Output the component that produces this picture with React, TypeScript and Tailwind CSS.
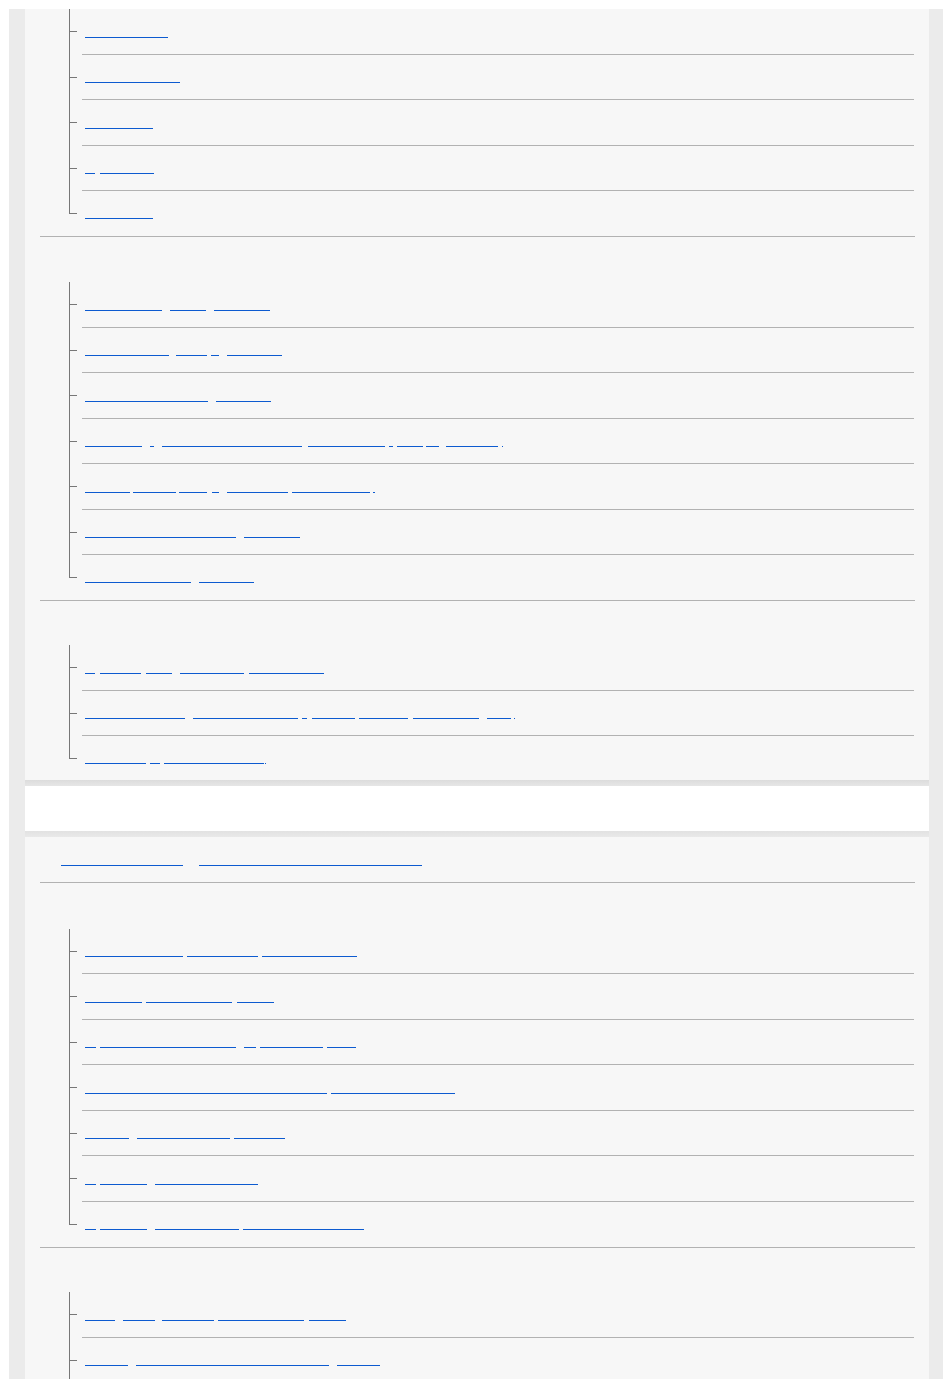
import React from "react";

type Seg = [number, number];

function Link({ segs, origin }: { segs: Seg[]; origin: number }) {
  const out: React.ReactNode[] = [];
  let prev = origin;
  segs.forEach(([a, b], i) => {
    out.push(
      <span
        key={i}
        className="block h-px shrink-0 bg-[#0d5bd0]"
        style={{ marginLeft: a - prev, width: b - a }}
      />
    );
    prev = b;
  });
  return (
    <a href="#" className="flex h-px" aria-label="link">
      {out}
    </a>
  );
}

function Item({ segs, last }: { segs: Seg[]; last: boolean }) {
  return (
    <li className="relative pl-[13px]">
      <span
        className={
          last
            ? "absolute left-0 top-0 h-[22px] w-px bg-[#777777]"
            : "absolute left-0 top-0 bottom-0 w-px bg-[#777777]"
        }
      />
      <span className="absolute left-0 top-[22px] h-px w-[8px] bg-[#777777]" />
      <div
        className={
          last
            ? "flex h-[45px] items-end pl-[3px] pb-[17px]"
            : "flex h-[45.5px] items-end border-b border-[#b2b2b2] pl-[3px] pb-[16px]"
        }
      >
        <Link segs={segs} origin={85} />
      </div>
    </li>
  );
}

function Tree({ items }: { items: Seg[][] }) {
  return (
    <ul className="ml-[29px] mr-[1px]">
      {items.map((s, i) => (
        <Item key={i} segs={s} last={i === items.length - 1} />
      ))}
    </ul>
  );
}

const secA: Seg[][] = [
  [[85, 168]],
  [[85, 180]],
  [[85, 153]],
  [
    [85, 95],
    [100, 154],
  ],
  [[85, 153]],
];

const secB: Seg[][] = [
  [
    [85, 162],
    [170, 206],
    [214, 270],
  ],
  [
    [85, 169],
    [176, 207],
    [211, 219],
    [227, 282],
  ],
  [
    [85, 208],
    [216, 271],
  ],
  [
    [85, 142],
    [150, 154],
    [162, 302],
    [308, 385],
    [389, 393],
    [397, 423],
    [426, 439],
    [446, 498],
    [502, 503],
  ],
  [
    [85, 130],
    [133, 176],
    [179, 207],
    [212, 219],
    [227, 288],
    [292, 370],
    [373, 375],
  ],
  [
    [85, 236],
    [244, 300],
  ],
  [
    [85, 191],
    [199, 254],
  ],
];

const secC: Seg[][] = [
  [
    [85, 95],
    [100, 141],
    [146, 172],
    [180, 244],
    [249, 324],
  ],
  [
    [85, 185],
    [193, 298],
    [302, 307],
    [312, 355],
    [359, 408],
    [413, 479],
    [487, 511],
    [514, 515],
  ],
  [
    [85, 146],
    [150, 160],
    [164, 264],
    [265, 266],
  ],
];

const p2Head: Seg[] = [
  [61, 183],
  [199, 422],
];

const p2s1: Seg[][] = [
  [
    [85, 183],
    [187, 258],
    [262, 357],
  ],
  [
    [85, 142],
    [146, 232],
    [237, 274],
  ],
  [
    [85, 96],
    [100, 236],
    [244, 256],
    [260, 323],
    [327, 356],
  ],
  [
    [85, 327],
    [331, 455],
  ],
  [
    [85, 129],
    [137, 230],
    [234, 285],
  ],
  [
    [85, 96],
    [100, 147],
    [155, 258],
  ],
  [
    [85, 96],
    [100, 147],
    [155, 239],
    [243, 364],
  ],
];

const p2s2: Seg[][] = [
  [
    [85, 115],
    [123, 155],
    [162, 214],
    [218, 304],
    [309, 346],
  ],
  [
    [85, 128],
    [136, 329],
    [337, 380],
  ],
  [[85, 200]],
];

export default function App() {
  return (
    <div
      className="h-[1379px] overflow-hidden bg-white pt-[9px]"
      style={{ fontFamily: '"Liberation Sans", Arial, sans-serif' }}
    >
      <div className="ml-[9px] h-[1400px] w-[934px] bg-[#ebebeb] pl-[16px] pr-[14px]">
        {/* Panel 1 */}
        <div className="h-[771px] overflow-hidden bg-[#f7f7f7]">
          <div className="ml-[15px] mr-[14px] border-b border-[#b2b2b2]">
            <Tree items={secA} />
          </div>
          <div className="ml-[15px] mr-[14px] border-b border-[#b2b2b2]">
            <div className="h-[45px]" />
            <Tree items={secB} />
          </div>
          <div className="ml-[15px] mr-[14px]">
            <div className="h-[44px]" />
            <Tree items={secC} />
          </div>
        </div>
        <div className="h-[6px] bg-gradient-to-b from-[#dcdcdc] to-[#e6e6e6]" />
        <div className="h-[45px] bg-white" />
        <div className="h-[6px] bg-gradient-to-b from-[#e2e2e2] to-[#e9e9e9]" />
        {/* Panel 2 */}
        <div className="bg-[#f7f7f7] pb-[40px]">
          <div className="ml-[15px] mr-[14px] flex h-[46px] items-end border-b border-[#b2b2b2] pl-[21px] pb-[16px]">
            <Link segs={p2Head} origin={61} />
          </div>
          <div className="ml-[15px] mr-[14px] border-b border-[#b2b2b2]">
            <div className="h-[45.5px]" />
            <Tree items={p2s1} />
          </div>
          <div className="ml-[15px] mr-[14px]">
            <div className="h-[44.5px]" />
            <Tree items={p2s2} />
          </div>
        </div>
      </div>
    </div>
  );
}
